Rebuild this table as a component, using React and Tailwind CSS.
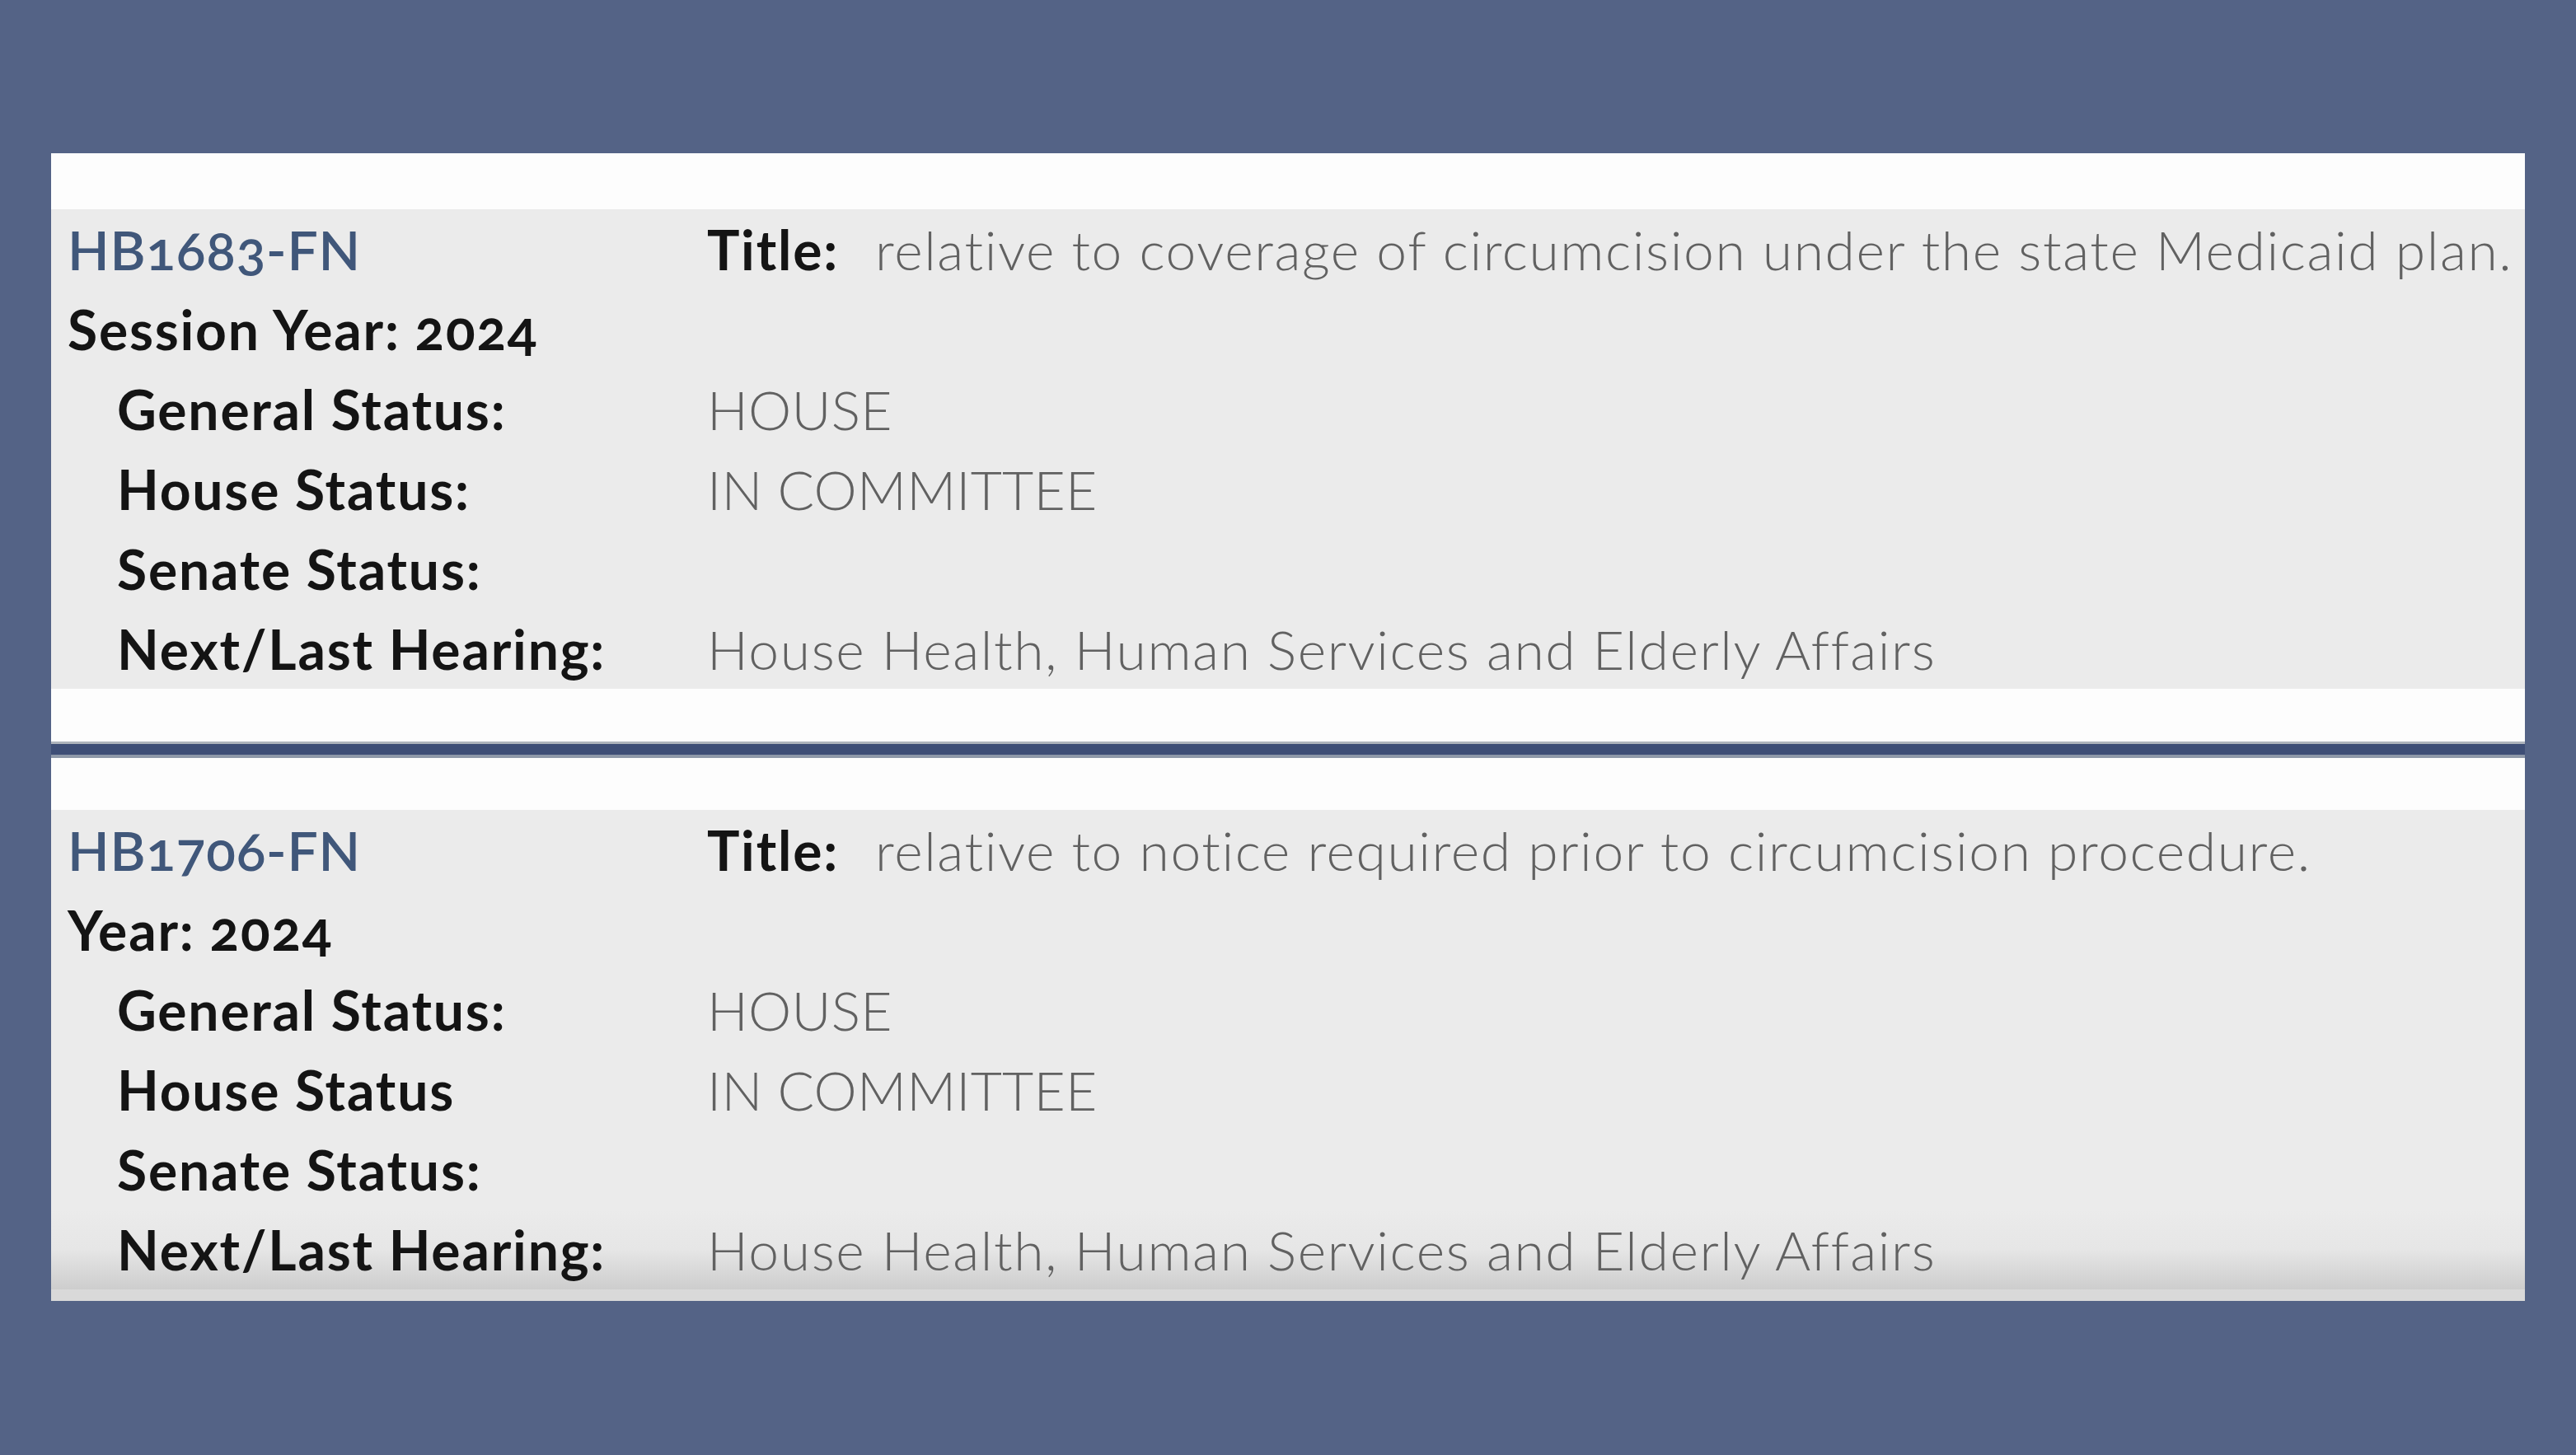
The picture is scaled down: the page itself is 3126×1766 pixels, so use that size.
import React from "react";

const font = { fontFamily: "Lato, 'Open Sans', sans-serif" };

function Row({ left, right, indent, className = "" }) {
  return (
    <div className={"grid grid-cols-[796px_1fr] h-[97px] items-center " + className}>
      <div className={indent ? "pl-[80px]" : "pl-[20px]"}>{left}</div>
      <div>{right}</div>
    </div>
  );
}

function Bill({ id, yearLabel, title, houseLabel, fade }) {
  const label = "text-[66px] font-bold text-[#141414] leading-none whitespace-nowrap tracking-[1.8px]";
  const value = "text-[66px] font-light text-[#616161] leading-none whitespace-nowrap tracking-[1.6px]";
  const caps = "text-[66px] font-light text-[#616161] leading-none whitespace-nowrap tracking-[0.2px]";
  return (
    <div className="bg-[#ebebeb] [font-feature-settings:'onum']">
      <Row
        left={<span className="text-[66px] font-semibold text-[#40577a] leading-none tracking-[0.8px]">{id}</span>}
        right={
          <div className="flex items-baseline gap-[44px]">
            <span className={label}>Title:</span>
            <span className={value}>{title}</span>
          </div>
        }
      />
      <Row left={<span className={label}>{yearLabel}</span>} right={null} />
      <Row indent left={<span className={label}>General Status:</span>} right={<span className={caps}>HOUSE</span>} />
      <Row indent left={<span className={label}>{houseLabel}</span>} right={<span className={caps}>IN COMMITTEE</span>} />
      <Row indent left={<span className={label}>Senate Status:</span>} right={null} />
      <Row
        indent
        className={fade ? "bg-gradient-to-b from-[#ebebeb] via-[#e6e6e6] to-[#cdcdcd]" : ""}
        left={<span className={label}>Next/Last Hearing:</span>}
        right={<span className={value}>House Health, Human Services and Elderly Affairs</span>}
      />
    </div>
  );
}

export default function App() {
  return (
    <div className="w-[3126px] h-[1766px] bg-[#546386] pt-[186px] px-[62px] overflow-hidden" style={font}>
      <div className="bg-[#fdfdfd] pt-[68px] pb-[64px]">
        <Bill
          id="HB1683-FN"
          yearLabel="Session Year: 2024"
          title="relative to coverage of circumcision under the state Medicaid plan."
          houseLabel="House Status:"
        />
      </div>
      <div className="h-[20px] bg-[#3e4e76] border-t-[3px] border-b-[4px] border-t-[#aeb4bc] border-b-[#8e98a8]" />
      <div className="bg-[#fdfdfd] pt-[63px]">
        <Bill
          id="HB1706-FN"
          yearLabel="Year: 2024"
          title="relative to notice required prior to circumcision procedure."
          houseLabel="House Status"
          fade
        />
        <div className="h-[14px] bg-[#d9d9d9]" />
      </div>
    </div>
  );
}
